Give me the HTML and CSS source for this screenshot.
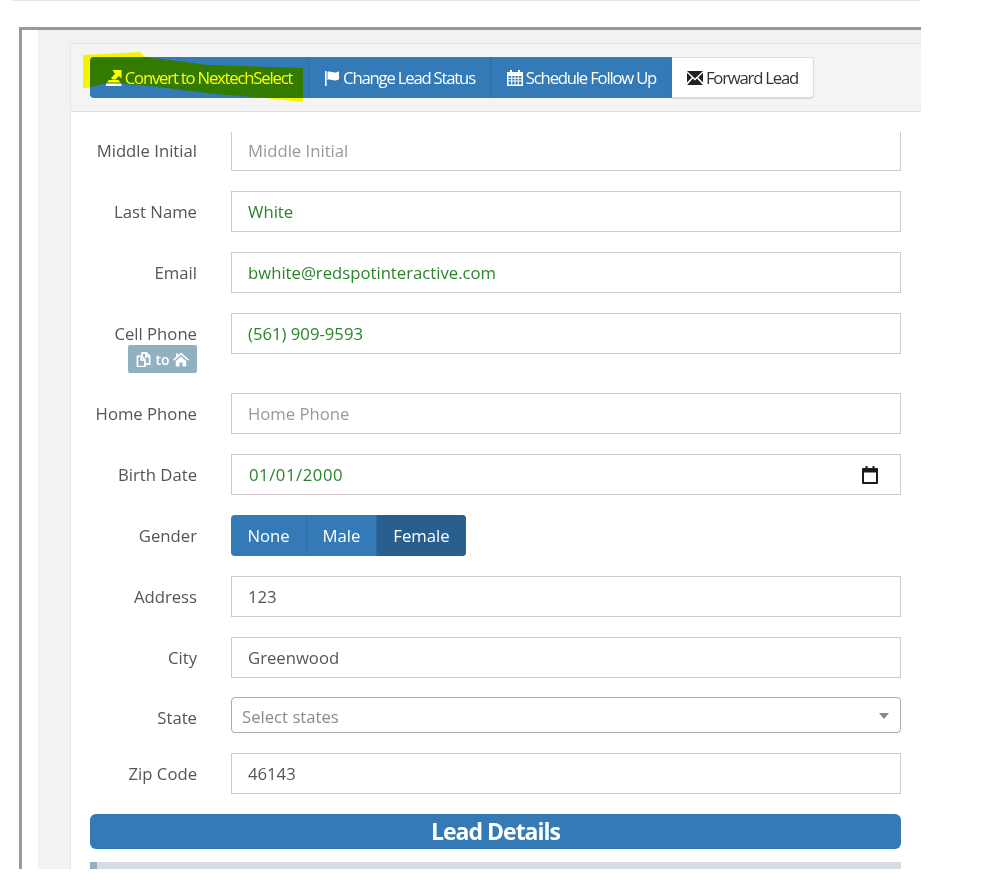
FILE: index.html
```html
<!DOCTYPE html>
<html lang="en">
<head>
<meta charset="utf-8">
<title>Lead</title>
<link rel="stylesheet" href="styles.css">
</head>
<body>
<div class="shot">
  <div class="topline"></div>
  <div class="frame">
    <div class="whitestrip"></div>
    <div class="canvas">
      <div class="panel">
        <div class="toolbar">
          <div class="btn-group">
            <button class="btn primary first">
              <svg class="ico" viewBox="0 0 16 16"><path d="M0 13.500h15.500V16H0z M3 10h9.500l2 2.500H1z M6.500 0H15.500v8.500l-2.800-2.500-3 3.500H6.500L5 8l4-4z" fill="#fff"/></svg>Convert to NextechSelect</button>
            <button class="btn primary">
              <svg class="ico" viewBox="0 0 16 16"><path d="M1 1h1.600v15H1z M3.500 2c3-1.500 5 1 8 .4 1.300-.2 2.500-.6 3.500-1.200v8c-1 .7-2.200 1.100-3.500 1.300-3 .4-5-1.900-8-.5z" fill="#fff"/></svg>Change Lead Status</button>
            <button class="btn primary">
              <svg class="ico" viewBox="0 0 16 16"><path fill="#fff" fill-rule="evenodd" d="M3 0h2v2h6V0h2v2h3v14H0V2h3z M1.500 6v1.800h2.700V6z M5.200 6v1.800h2.300V6z M8.500 6v1.800h2.300V6z M11.800 6v1.800h2.700V6z M1.500 8.800v1.800h2.700V8.800z M5.200 8.800v1.800h2.300V8.800z M8.500 8.800v1.800h2.300V8.800z M11.800 8.800v1.800h2.700V8.800z M1.500 11.600v2.900h2.700v-2.900z M5.200 11.600v2.900h2.300v-2.900z M8.500 11.600v2.900h2.300v-2.900z M11.800 11.600v2.900h2.700v-2.900z"/></svg>Schedule Follow Up</button>
            <button class="btn plain last">
              <svg class="ico" viewBox="0 0 16 14"><path fill="#222" d="M0 0h16L8 7.500z M0 1.800l4.800 4.700L0 11.500z M16 1.800v9.700l-4.800-5z M5.800 7.500L8 9.500l2.200-2L15.800 14H.2z"/></svg>Forward Lead</button>
          </div>
        </div>
        <div class="body">
          <div class="form">
            <div class="row row-clipped">
              <label class="lbl lbl-clipped">Middle Initial</label>
              <div class="ctl"><div class="input input-clipped placeholder">Middle Initial</div></div>
            </div>
            <div class="row"><label class="lbl">Last Name</label><div class="ctl"><div class="input green">White</div></div></div>
            <div class="row"><label class="lbl">Email</label><div class="ctl"><div class="input green">bwhite@redspotinteractive.com</div></div></div>
            <div class="row row-cell">
              <div class="lbl-stack">
                <label class="lbl">Cell Phone</label>
                <span class="copy">
                  <svg class="copy-ico" viewBox="0 0 16 16"><path fill="none" stroke="#fff" stroke-width="1.800" d="M6 4V1h4.500L14 4.500V13H9 M1 4.500h4.500L9 8v7.500H1z M5 4.500V8.500h4 M10 1v4h4"/></svg>
                  to
                  <svg class="copy-ico" viewBox="0 0 16 14"><path fill="#fff" d="M8 0l8 7-1 1.200L8 2.200 1 8.200 0 7l3-2.600V1h2v1.700z M2.800 8.500L8 4l5.200 4.500V14H9.500v-4h-3v4H2.800z"/></svg>
                </span>
              </div>
              <div class="ctl"><div class="input green">(561) 909-9593</div></div>
            </div>
            <div class="row"><label class="lbl">Home Phone</label><div class="ctl"><div class="input placeholder">Home Phone</div></div></div>
            <div class="row"><label class="lbl">Birth Date</label><div class="ctl">
              <div class="input green date"><span>01/01/2000</span>
                <svg class="cal" viewBox="0 0 16 18"><path fill="#1a1a1a" d="M3.500 0h2v2h5V0h2v2H15a1 1 0 0 1 1 1v14a1 1 0 0 1-1 1H1a1 1 0 0 1-1-1V3a1 1 0 0 1 1-1h2.500z M2 6.500V16h12V6.500z"/></svg>
              </div></div></div>
            <div class="row"><label class="lbl">Gender</label><div class="ctl">
              <div class="seg">
                <span class="seg-item">None</span><span class="seg-item">Male</span><span class="seg-item active">Female</span>
              </div></div></div>
            <div class="row"><label class="lbl">Address</label><div class="ctl"><div class="input">123</div></div></div>
            <div class="row"><label class="lbl">City</label><div class="ctl"><div class="input">Greenwood</div></div></div>
            <div class="row row-state"><label class="lbl">State</label><div class="ctl">
              <div class="select"><span>Select states</span><span class="caret"></span></div></div></div>
            <div class="row"><label class="lbl lbl-zip">Zip Code</label><div class="ctl"><div class="input">46143</div></div></div>
          </div>
          <div class="section-title">Lead Details</div>
          <div class="strip"><span class="strip-mark"></span></div>
        </div>
      </div>
    </div>
  </div>
  <svg class="marker" width="260" height="70" viewBox="0 0 260 70"><polygon fill="#ffff00" points="3,5 60,2 65,7 128,15 223,18 223,52 185,48 135,44 62,35 28,33 5,38 3,38"/></svg>
</div>
</body>
</html>
```
FILE: styles.css
```css
* { box-sizing: border-box; }
html, body { margin: 0; padding: 0; background: #fff; }
body { font-family: "Open Sans", sans-serif; font-size: 16.7px; color: #555; }
.shot { position: relative; width: 921px; height: 869px; overflow: hidden; }
.topline { height: 1px; margin-left: 12px; background: #e6e6e6; }
.frame { display: flex; margin: 26px 0 0 19px; height: 842px; border-top: 3px solid #999; border-left: 3px solid #999; }
.whitestrip { width: 16px; flex: none; }
.canvas { flex: 1; padding: 13px 0 0 32px; background: #f2f2f2; min-width: 0; }
.panel { height: 100%; background: #fff; border-left: 1px solid #e6e6e6; border-top: 1px solid #e6e6e6; }
.toolbar { height: 68px; padding: 13px 0 0 19px; background: #f4f4f4; border-bottom: 1px solid #ddd; }
.btn-group { display: flex; height: 41px; }
.btn { display: flex; align-items: center; justify-content: center; height: 41px; padding: 0; border: 0; font: 400 16.7px "Open Sans", sans-serif; letter-spacing: -1.2px; white-space: nowrap; }
.primary { background: #337ab7; color: #fff; border-right: 1px solid #2e6da4; }
.first { width: 219px; border-radius: 4px 0 0 4px; }
.btn:nth-child(2) { width: 182px; }
.btn:nth-child(3) { width: 181px; border-right: 0; }
.plain { width: 142px; background: #fff; color: #333; border: 1px solid #ddd; border-left: 0; border-radius: 0 4px 4px 0; box-shadow: 0 1px 1px rgba(0,0,0,.12); }
.ico { width: 16px; height: 16px; margin-right: 3px; flex: none; }
.body { padding: 20px 20px 0 19px; height: 790px; overflow: hidden; }
.form { display: flex; flex-direction: column; gap: 20px; }
.row { display: flex; align-items: flex-start; gap: 34px; }
.row-clipped { height: 39px; }
.row-cell { height: 60px; }
.row-state { height: 36px; margin-top: -1px; }
.lbl { width: 107px; flex: none; height: 41px; line-height: 41px; text-align: right; color: #555; white-space: nowrap; }
.lbl-clipped { height: 39px; line-height: 38px; }
.lbl-stack { width: 107px; flex: none; display: flex; flex-direction: column; align-items: flex-end; }
.lbl-stack .lbl { height: 41px; }
.lbl-zip { line-height: 42px; }
.copy { display: flex; align-items: center; justify-content: center; gap: 3px; width: 69px; height: 28px; margin-top: -9px; background: #91b1c2; color: #fff; border-radius: 2px; font-size: 14px; font-weight: 600; }
.copy-ico { width: 16px; height: 15px; }
.ctl { flex: 1; min-width: 0; }
.input { height: 41px; padding: 0 16px; line-height: 40px; border: 1px solid #ccc; color: #555; background: #fff; }
.input-clipped { height: 39px; line-height: 38px; border-top: 0; }
.placeholder { color: #999; }
.green { color: #2b842b; }
.date { display: flex; justify-content: space-between; align-items: center; padding: 0 22px 0 17px; letter-spacing: .55px; }
.cal { width: 16px; height: 18px; }
.seg { display: inline-flex; height: 41px; border-radius: 4px; overflow: hidden; background: #337ab7; color: #fff; }
.seg-item { display: flex; align-items: center; justify-content: center; width: 76px; border-right: 1px solid #2e6da4; }
.seg-item:nth-child(2) { width: 70px; }
.seg-item.active { width: 89px; background: #285f8f; border-right: 0; }
.select { display: flex; justify-content: space-between; align-items: center; height: 36px; padding: 2px 11px 0 10px; border: 1px solid #aaa; border-radius: 4px; color: #8a8a8a; background: #fff; }
.caret { width: 0; height: 0; border-left: 5px solid transparent; border-right: 5px solid transparent; border-top: 6px solid #888; }
.section-title { height: 35px; margin-top: 20px; line-height: 34px; text-align: center; background: #337ab7; color: #fff; border-radius: 6px; font-size: 23px; font-weight: 700; letter-spacing: -1px; }
.strip { height: 12px; margin-top: 13px; background: #d5dce8; }
.strip-mark { display: block; width: 7px; height: 100%; background: #91b1c2; }
.marker { position: absolute; left: 80px; top: 50px; mix-blend-mode: multiply; }
```
